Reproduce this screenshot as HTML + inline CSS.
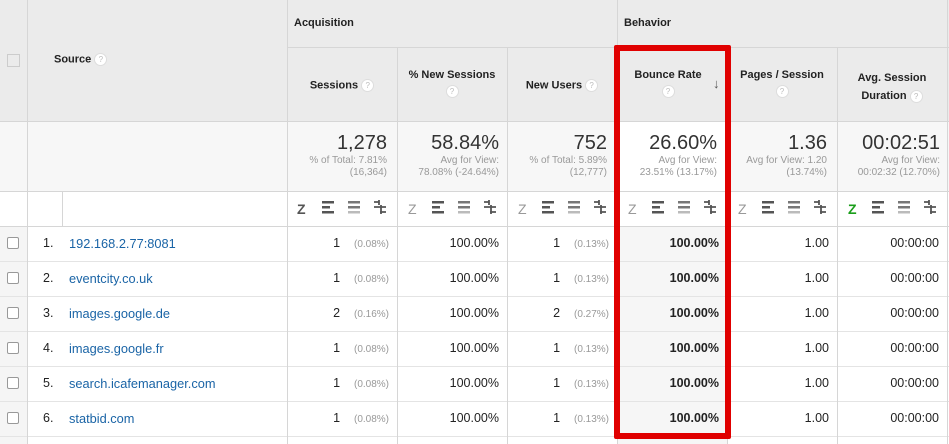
<!DOCTYPE html>
<html><head><meta charset="utf-8"><style>
*{margin:0;padding:0;box-sizing:border-box}
body{width:949px;height:444px;overflow:hidden;background:#fff;font-family:"Liberation Sans",Arial,sans-serif;position:relative;color:#222}
.a{position:absolute}
.hl{position:absolute;height:1px;background:#d6d6d6}
.vl{position:absolute;width:1px;background:#d6d6d6}
.h{font-size:11px;font-weight:bold;color:#222}
.q{display:inline-block;width:13px;height:13px;border-radius:50%;background:#fff;border:1px solid #ddd;color:#bbb;font-size:8px;line-height:11px;text-align:center;font-weight:normal;vertical-align:middle}
.tot{position:absolute;top:131px;text-align:right;width:100px}
.tot .n{font-size:20px;color:#333;line-height:24px}
.tot .s{font-size:10px;color:#999;line-height:12px}
.cell{position:absolute;font-size:12.5px;text-align:right;color:#222}
.p{color:#999;font-size:10px}
.num{position:absolute;left:43px;font-size:12.5px}
.lnk{position:absolute;left:69px;color:#1a64a6;font-size:12.8px}
.cb{position:absolute;left:7px;width:12px;height:12px;border:1px solid #999;border-radius:2px;background:#fff}
</style></head><body>
<div class="a" style="left:0;top:0;width:949px;height:121px;background:#ebebeb"></div>
<div class="a" style="left:0;top:121px;width:949px;height:70px;background:#f7f7f7"></div>
<div class="a" style="left:617px;top:121px;width:110px;height:70px;background:#fff"></div>
<div class="a" style="left:0;top:226px;width:27px;height:218px;background:#f5f5f5"></div>
<div class="a" style="left:617px;top:226px;width:110px;height:218px;background:#f6f6f6"></div>
<div class="hl" style="left:287px;top:47px;width:662px"></div>
<div class="hl" style="left:0;top:121px;width:949px"></div>
<div class="hl" style="left:0;top:191px;width:949px"></div>
<div class="hl" style="left:0;top:226px;width:949px"></div>
<div class="hl" style="left:0;top:261px;width:949px;background:#e4e4e4"></div>
<div class="hl" style="left:0;top:296px;width:949px;background:#e4e4e4"></div>
<div class="hl" style="left:0;top:331px;width:949px;background:#e4e4e4"></div>
<div class="hl" style="left:0;top:366px;width:949px;background:#e4e4e4"></div>
<div class="hl" style="left:0;top:401px;width:949px;background:#e4e4e4"></div>
<div class="hl" style="left:0;top:436px;width:949px;background:#e4e4e4"></div>
<div class="vl" style="left:27px;top:0;height:444px"></div>
<div class="vl" style="left:62px;top:191px;height:35px"></div>
<div class="vl" style="left:287px;top:0;height:444px"></div>
<div class="vl" style="left:397px;top:47px;height:397px"></div>
<div class="vl" style="left:507px;top:47px;height:397px"></div>
<div class="vl" style="left:617px;top:0;height:444px"></div>
<div class="vl" style="left:727px;top:47px;height:397px"></div>
<div class="vl" style="left:837px;top:47px;height:397px"></div>
<div class="vl" style="left:947px;top:0;height:444px"></div>
<div class="a" style="left:7px;top:54px;width:13px;height:13px;border:1px solid #ccc;background:#ebebeb"></div>
<div class="a h" style="left:54px;top:53px">Source <span class="q">?</span></div>
<div class="a h" style="left:294px;top:17px">Acquisition</div>
<div class="a h" style="left:624px;top:17px">Behavior</div>
<div class="a h" style="left:287px;top:79px;width:110px;text-align:center">Sessions <span class="q">?</span></div>
<div class="a h" style="left:397px;top:69px;width:110px;text-align:center">% New Sessions<br><span class="q" style="margin-top:4px">?</span></div>
<div class="a h" style="left:507px;top:79px;width:110px;text-align:center">New Users <span class="q">?</span></div>
<div class="a h" style="left:617px;top:69px;width:102px;text-align:center">Bounce Rate<br><span class="q" style="margin-top:4px">?</span></div>
<div class="a" style="left:713px;top:76px;font-size:13px;color:#555;font-weight:bold">↓</div>
<div class="a h" style="left:727px;top:69px;width:110px;text-align:center">Pages / Session<br><span class="q" style="margin-top:4px">?</span></div>
<div class="a h" style="left:837px;top:69px;width:110px;text-align:center;line-height:18px">Avg. Session<br>Duration <span class="q">?</span></div>
<div class="tot" style="left:287px"><div class="n">1,278</div><div class="s">% of Total: 7.81%<br>(16,364)</div></div>
<div class="tot" style="width:106px;left:393px"><div class="n">58.84%</div><div class="s">Avg for View:<br>78.08% (-24.64%)</div></div>
<div class="tot" style="left:507px"><div class="n">752</div><div class="s">% of Total: 5.89%<br>(12,777)</div></div>
<div class="tot" style="left:613px;width:104px"><div class="n">26.60%</div><div class="s">Avg for View:<br>23.51% (13.17%)</div></div>
<div class="tot" style="left:727px"><div class="n">1.36</div><div class="s">Avg for View: 1.20<br>(13.74%)</div></div>
<div class="tot" style="left:837px;width:103px"><div class="n">00:02:51</div><div class="s">Avg for View:<br>00:02:32 (12.70%)</div></div>
<svg class="a" style="left:0;top:191px" width="949" height="35">
<defs>
<g id="ic">
<rect x="24" y="10" width="12" height="2.5" fill="#555"/><rect x="24" y="15" width="8" height="2.5" fill="#555"/><rect x="24" y="20" width="12" height="2.5" fill="#555"/>
<rect x="50" y="10" width="12" height="2.5" fill="#777"/><rect x="50" y="15" width="12" height="2.5" fill="#777"/><rect x="50" y="20" width="12" height="2.5" fill="#bbb"/>
<path d="M76 11h5M76 16h12M82 21h6M81 9v5M83 14v9" stroke="#555" stroke-width="1.8" fill="none"/>
</g></defs>
<text x="297" y="23" font-family="Liberation Sans" font-size="14" font-weight="bold" fill="#555">Z</text><use href="#ic" x="298"/>
<text x="408" y="23" font-family="Liberation Sans" font-size="14" fill="#999">Z</text><use href="#ic" x="408"/>
<text x="518" y="23" font-family="Liberation Sans" font-size="14" fill="#999">Z</text><use href="#ic" x="518"/>
<text x="628" y="23" font-family="Liberation Sans" font-size="14" fill="#999">Z</text><use href="#ic" x="628"/>
<text x="738" y="23" font-family="Liberation Sans" font-size="14" fill="#999">Z</text><use href="#ic" x="738"/>
<text x="848" y="23" font-family="Liberation Sans" font-size="14" font-weight="bold" fill="#1a9e1a">Z</text><use href="#ic" x="848"/>
</svg>
<div class="cb" style="top:237px"></div><div class="cb" style="top:272px"></div><div class="cb" style="top:307px"></div><div class="cb" style="top:342px"></div><div class="cb" style="top:377px"></div><div class="cb" style="top:412px"></div>

<div class="num" style="top:236px">1.</div><div class="lnk" style="top:236px">192.168.2.77:8081</div>
<div class="num" style="top:271px">2.</div><div class="lnk" style="top:271px">eventcity.co.uk</div>
<div class="num" style="top:306px">3.</div><div class="lnk" style="top:306px">images.google.de</div>
<div class="num" style="top:341px">4.</div><div class="lnk" style="top:341px">images.google.fr</div>
<div class="num" style="top:376px">5.</div><div class="lnk" style="top:376px">search.icafemanager.com</div>
<div class="num" style="top:411px">6.</div><div class="lnk" style="top:411px">statbid.com</div>

<div class="cell" style="left:290px;top:236px;width:99px">1&nbsp;&nbsp;&nbsp;&nbsp;<span class="p">(0.08%)</span></div>
<div class="cell" style="left:290px;top:271px;width:99px">1&nbsp;&nbsp;&nbsp;&nbsp;<span class="p">(0.08%)</span></div>
<div class="cell" style="left:290px;top:306px;width:99px">2&nbsp;&nbsp;&nbsp;&nbsp;<span class="p">(0.16%)</span></div>
<div class="cell" style="left:290px;top:341px;width:99px">1&nbsp;&nbsp;&nbsp;&nbsp;<span class="p">(0.08%)</span></div>
<div class="cell" style="left:290px;top:376px;width:99px">1&nbsp;&nbsp;&nbsp;&nbsp;<span class="p">(0.08%)</span></div>
<div class="cell" style="left:290px;top:411px;width:99px">1&nbsp;&nbsp;&nbsp;&nbsp;<span class="p">(0.08%)</span></div>

<div class="cell" style="left:400px;top:236px;width:99px">100.00%</div>
<div class="cell" style="left:400px;top:271px;width:99px">100.00%</div>
<div class="cell" style="left:400px;top:306px;width:99px">100.00%</div>
<div class="cell" style="left:400px;top:341px;width:99px">100.00%</div>
<div class="cell" style="left:400px;top:376px;width:99px">100.00%</div>
<div class="cell" style="left:400px;top:411px;width:99px">100.00%</div>

<div class="cell" style="left:510px;top:236px;width:99px">1&nbsp;&nbsp;&nbsp;&nbsp;<span class="p">(0.13%)</span></div>
<div class="cell" style="left:510px;top:271px;width:99px">1&nbsp;&nbsp;&nbsp;&nbsp;<span class="p">(0.13%)</span></div>
<div class="cell" style="left:510px;top:306px;width:99px">2&nbsp;&nbsp;&nbsp;&nbsp;<span class="p">(0.27%)</span></div>
<div class="cell" style="left:510px;top:341px;width:99px">1&nbsp;&nbsp;&nbsp;&nbsp;<span class="p">(0.13%)</span></div>
<div class="cell" style="left:510px;top:376px;width:99px">1&nbsp;&nbsp;&nbsp;&nbsp;<span class="p">(0.13%)</span></div>
<div class="cell" style="left:510px;top:411px;width:99px">1&nbsp;&nbsp;&nbsp;&nbsp;<span class="p">(0.13%)</span></div>

<div class="cell" style="left:620px;top:236px;width:99px;font-weight:bold">100.00%</div>
<div class="cell" style="left:620px;top:271px;width:99px;font-weight:bold">100.00%</div>
<div class="cell" style="left:620px;top:306px;width:99px;font-weight:bold">100.00%</div>
<div class="cell" style="left:620px;top:341px;width:99px;font-weight:bold">100.00%</div>
<div class="cell" style="left:620px;top:376px;width:99px;font-weight:bold">100.00%</div>
<div class="cell" style="left:620px;top:411px;width:99px;font-weight:bold">100.00%</div>

<div class="cell" style="left:730px;top:236px;width:99px">1.00</div>
<div class="cell" style="left:730px;top:271px;width:99px">1.00</div>
<div class="cell" style="left:730px;top:306px;width:99px">1.00</div>
<div class="cell" style="left:730px;top:341px;width:99px">1.00</div>
<div class="cell" style="left:730px;top:376px;width:99px">1.00</div>
<div class="cell" style="left:730px;top:411px;width:99px">1.00</div>

<div class="cell" style="left:840px;top:236px;width:99px">00:00:00</div>
<div class="cell" style="left:840px;top:271px;width:99px">00:00:00</div>
<div class="cell" style="left:840px;top:306px;width:99px">00:00:00</div>
<div class="cell" style="left:840px;top:341px;width:99px">00:00:00</div>
<div class="cell" style="left:840px;top:376px;width:99px">00:00:00</div>
<div class="cell" style="left:840px;top:411px;width:99px">00:00:00</div>

<div class="a" style="left:614px;top:45px;width:117px;height:394px;border:6px solid #e00000;border-radius:2px"></div>
</body></html>
